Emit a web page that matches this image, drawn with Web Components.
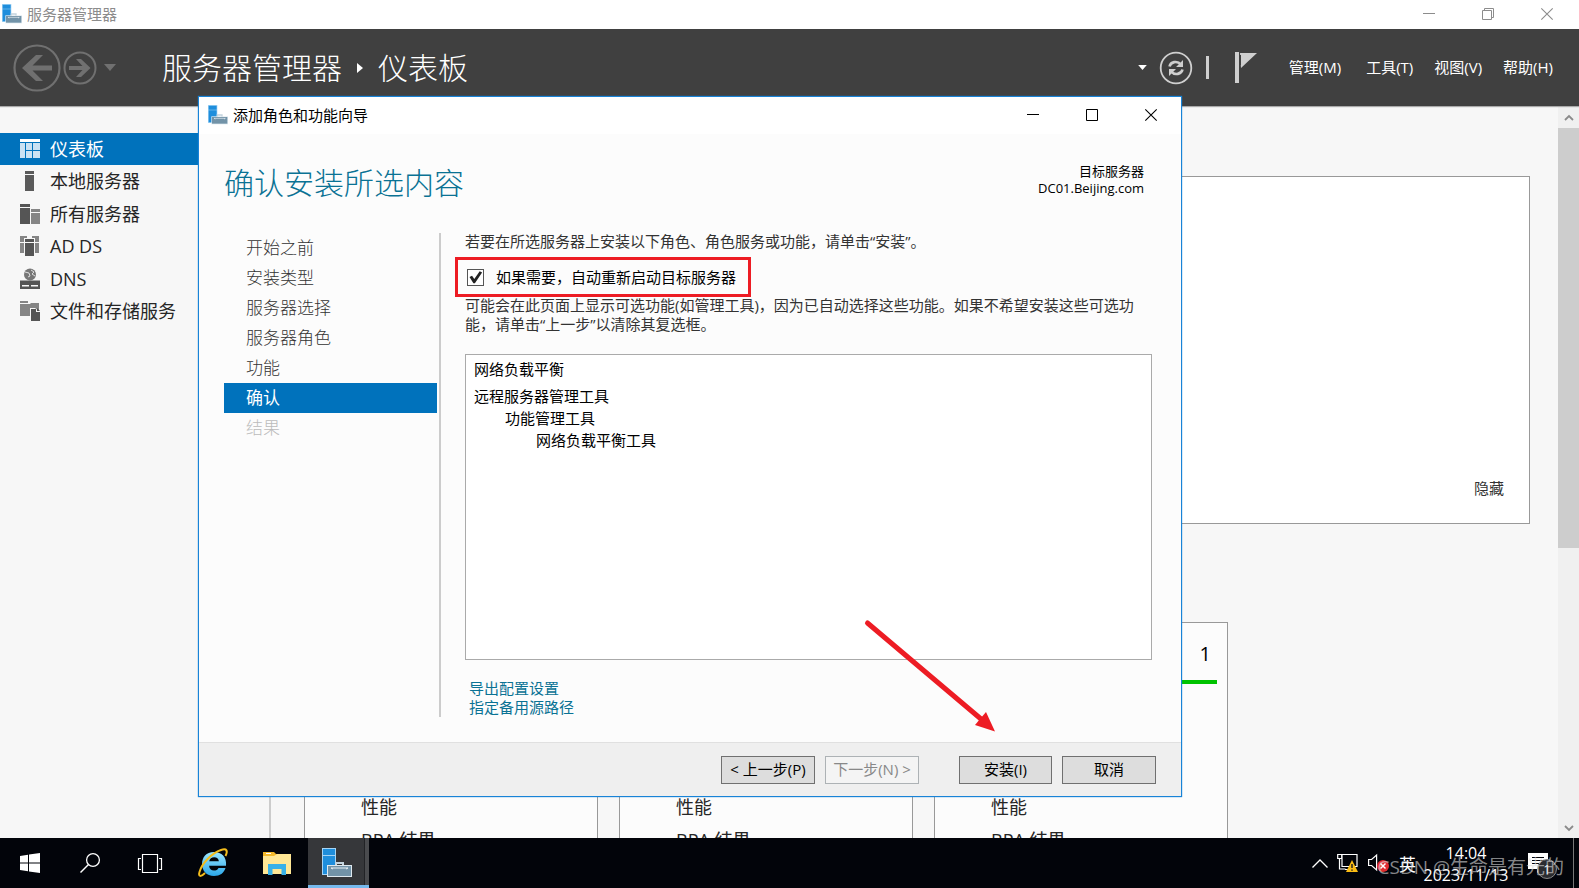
<!DOCTYPE html>
<html lang="zh-CN">
<head>
<meta charset="utf-8">
<title>服务器管理器</title>
<style>
  html, body { height: 100%; margin: 0; }
  body { font-family: "Open Sans", "Noto Sans CJK SC", sans-serif; font-size: 15px; overflow: hidden; }
</style>
</head>
<body>
<sm-desktop></sm-desktop>
<script>
const RESET = `*{box-sizing:border-box}button{font:inherit;color:inherit;background:none;border:0;padding:0;margin:0}a{color:inherit;text-decoration:none}h1,h2,p,ul{margin:0;padding:0;font-weight:inherit}ul{list-style:none}`;

function define(name, css, html) {
  customElements.define(name, class extends HTMLElement {
    constructor() {
      super();
      const t = document.createElement('template');
      t.innerHTML = `<style>${RESET}${css}</style>${html}`;
      this.attachShadow({ mode: 'open' }).append(t.content.cloneNode(true));
    }
  });
}

const ICONS = {
  server: ['0 0 30 30', `<path d="M0 0h14v27H0z" fill="#a5d4f5"/><path d="M1 1h12v6H1zM1 8h12v18H1z" fill="#1f8edc"/><path d="M14 18v-3h7v3" fill="none" stroke="#c4d4de" stroke-width="2"/><path d="M5 17h25v12H5z" fill="#dfe9ef"/><path d="M6 18h23v10H6z" fill="#7293a8"/><path d="M9 20h17M9 20l2 1M26 20l-2 1" stroke="#e8eff4" fill="none"/>`],
  back: ['0 0 48 48', `<circle cx="24" cy="24" r="22.500" fill="none" stroke="#707070" stroke-width="2.200"/><path d="M9 24L23 11h7L19.500 21.500H39v5H19.500L30 37h-7z" fill="#707070"/>`],
  forward: ['0 0 34 34', `<circle cx="17" cy="17" r="15.500" fill="none" stroke="#707070" stroke-width="2"/><path d="M27.500 17L18 8h-5l6.500 7H6v4h13.500L13 26h5z" fill="#707070"/>`],
  down: ['0 0 12 7', `<path d="M0 0h12L6 7z" fill="currentColor"/>`],
  right: ['0 0 6 10', `<path d="M0 0l6 5-6 5z" fill="currentColor"/>`],
  refresh: ['0 0 34 34', `<circle cx="17" cy="17" r="15.300" fill="none" stroke="#cfcfcf" stroke-width="1.800"/><g fill="none" stroke="#cfcfcf" stroke-width="2.600"><path d="M10.500 15.500C11.500 11 18 9 22 13.500"/><path d="M23.500 18.500C22.500 23 16 25 12 20.500"/></g><path d="M24 9v7h-7zM10 25v-7h7z" fill="#cfcfcf"/>`],
  flag: ['0 0 22 31', `<path d="M0 0h4v31H0zM5 1h17L6 16z" fill="#cfcfcf"/><path d="M5.500 3v10" stroke="#404040"/>`],
  min: ['0 0 12 12', `<path d="M0 5.500h12" stroke="currentColor"/>`],
  max: ['0 0 12 12', `<path d="M.5.500h11v11H.5z" fill="none" stroke="currentColor"/>`],
  restore: ['0 0 12 12', `<path d="M.5 2.500h9v9h-9zM2.500 2.500v-2h9v9h-2" fill="none" stroke="currentColor"/>`],
  close: ['0 0 12 12', `<path d="M.3.300l11.400 11.400M11.700.300L.3 11.700" stroke="currentColor" stroke-width="1.100"/>`],
  dashboard: ['0 0 20 20', `<path d="M0 0h20v3H0z" fill="#fff"/><path d="M0 4h5v15H0zM6 4h6v7H6zM13 4h7v7h-7zM6 12h6v7H6zM13 12h7v7h-7z" fill="#cbe2f3"/>`],
  local: ['0 0 20 20', `<path d="M5 0h9v3H5zM5 4h9v16H5z" fill="#5a5a5a"/>`],
  all: ['0 0 20 20', `<path d="M0 0h10v3H0zM0 4h10v16H0z" fill="#555"/><path d="M11 5h9v3h-9zM11 9h9v11h-9z" fill="#858585"/>`],
  adds: ['0 0 20 20', `<path d="M0 0h7v2H4v4H0zM12 0h7v6h-4V2h-3zM0 7h4v10H0zM15 7h4v10h-4z" fill="#858585"/><path d="M5 3h9v3H5zM5 7h9v13H5z" fill="#555"/>`],
  dns: ['0 0 20 20', `<circle cx="10" cy="5.500" r="6" fill="#777"/><path d="M5 3l4 1 1 3-2 1M11 1l3 2-2 2 3 2" stroke="#ddd" fill="none"/><path d="M0 11.500h20V20H0z" fill="#555"/><path d="M2 16h7v1.500H2zM11 16h7v1.500h-7z" fill="#f7f7f7"/>`],
  files: ['0 0 20 20', `<path d="M0 0h8v2H0zM0 3h9v12H0z" fill="#858585"/><path d="M9 3h1l1-1h8v8l-4-3h-5v8H9z" fill="#858585"/><path d="M11 8h5v3h4v9h-9z" fill="#555"/><path d="M17 7l3 3h-3z" fill="#555"/>`],
  up: ['0 0 10 6', `<path d="M1 5l4-4 4 4" fill="none" stroke="#8a8a8a" stroke-width="1.800"/>`],
  dn: ['0 0 10 6', `<path d="M1 1l4 4 4-4" fill="none" stroke="#8a8a8a" stroke-width="1.800"/>`],
  arrow: ['0 0 136 115', `<path d="M4.500 5L118 101" stroke="#ed1c24" stroke-width="5" stroke-linecap="round"/><path d="M123 94l9 19.500-20-6.500 5-6z" fill="#ed1c24"/>`],
  start: ['0 0 20 20', `<path d="M0 3l8-1.200V9.500H0zM9 1.600L20 0v9.500H9zM0 10.500h8v7.700L0 17zM9 10.500h11V20L9 18.400z" fill="#fff"/>`],
  search: ['0 0 20 20', `<circle cx="13" cy="7" r="6.400" fill="none" stroke="#fff" stroke-width="1.300"/><path d="M8.500 11.500L.5 19.500" stroke="#fff" stroke-width="1.500"/>`],
  tasks: ['0 0 24 19', `<path d="M4.500.500h15v18h-15zM3 4.500H.5v11H3M21 4.500h2.500v11H21" fill="none" stroke="#fff" stroke-width="1.200"/>`],
  ie: ['0 0 30 30', `<defs><linearGradient id="g" x2="0" y2="1"><stop stop-color="#9be6ff"/><stop offset="1" stop-color="#2ba7ea"/></linearGradient></defs><path d="M16 4C8 4 4 9.500 4 16s4.500 12 12 12c6 0 10-3 11.500-8h-7c-1 1.800-2.300 2.600-4.500 2.600-3 0-4.700-1.800-4.900-4.800H28C29 9 23.500 4 16 4zm-4.800 9.300c.6-2.700 2.300-4 5-4s4.300 1.300 4.700 4z" fill="url(#g)"/><path d="M7 25C3 29 0 29 1.500 24 4 15 14 5 23 2c6-2 7 1 4.500 6" fill="none" stroke="#f4bd1c" stroke-width="2"/>`],
  folder: ['0 0 28 24', `<path d="M0 1h11l2 2h14v5H0z" fill="#f5b92a"/><path d="M3 2h5v1H3z" fill="#fff"/><path d="M0 5h11l3-2h14v20H0z" fill="#ffe795"/><path d="M5 13h18v11h-4.500v-6h-9v6H5z" fill="#38b1e8"/>`],
  chevron: ['0 0 16 9', `<path d="M.5 8.500L8 1l7.500 7.500" fill="none" stroke="#fff" stroke-width="1.300"/>`],
  network: ['0 0 22 20', `<path d="M5 1.500h15v12H5zM8 16.500h5M.7 1.500h4v4h-4zM2.500 6v10h6" fill="none" stroke="#fff" stroke-width="1.200"/><path d="M15 7l6 12H9z" fill="#fbbc14"/><path d="M15 11v4M15 16.500v1.200" stroke="#222" stroke-width="1.500"/>`],
  sound: ['0 0 22 20', `<path d="M.6 6.500h3l5-4.500v15l-5-4.500h-3z" fill="none" stroke="#fff" stroke-width="1.200"/><circle cx="15" cy="13" r="6" fill="#e22b2f"/><path d="M12.500 10.500l5 5M17.500 10.500l-5 5" stroke="#fff" stroke-width="1.500"/>`],
  notes: ['0 0 20 20', `<path d="M0 0h20v16h-7l-4 4v-4H0z" fill="#fff"/><path d="M4 4.500h12M4 7.500h12M4 10.500h12" stroke="#02040a"/>`]
};
customElements.define('sm-icon', class extends HTMLElement {
  connectedCallback() {
    if (this.shadowRoot) return;
    const [box, body] = ICONS[this.getAttribute('name')];
    this.attachShadow({ mode: 'open' }).innerHTML =
      `<style>:host{display:block;flex:none;width:var(--w,20px);height:var(--h,var(--w,20px))}svg{display:block;width:100%;height:100%;overflow:visible}</style><svg viewBox="${box}" aria-hidden="true">${body}</svg>`;
  }
});

/* Caption bar shared by the main window and the wizard */
define('window-caption', `
  :host{display:flex;align-items:center;background:#fff;flex:none}
  .t{margin-left:5px;flex:1;line-height:20px}
  .c{display:flex;gap:47px} .c button{--w:12px}`,
  `<sm-icon name="server"></sm-icon><span class="t"><slot></slot></span>
   <div class="c"><button aria-label="最小化"><sm-icon name="min"></sm-icon></button>
   <button aria-label="最大化"><slot name="size"><sm-icon name="max"></sm-icon></slot></button>
   <button aria-label="关闭"><sm-icon name="close"></sm-icon></button></div>`);

define('sm-header', `
  :host{display:flex;align-items:center;height:77px;flex:none;background:#404040;color:#fff;padding:0 26px 0 13px;box-shadow:0 1px 1px #aaa;position:relative}
  .nav{display:flex;align-items:center;gap:2px;color:#707070}
  .nav .m{--w:12px;--h:7px;margin-left:5px}
  h1{display:flex;align-items:center;gap:15px;margin-left:46px;flex:1;font-size:30px;line-height:40px;font-weight:300}
  .tools{display:flex;align-items:center}
  .bar{width:3px;height:23px;background:#cfcfcf;margin:0 26px 0 13px}
  menu{display:flex;gap:21px;margin:0 0 0 32px;padding:0 0 2px;line-height:20px}
  menu button:first-child{margin-right:4px}`,
  `<div class="nav"><button aria-label="后退" style="--w:48px"><sm-icon name="back"></sm-icon></button>
   <button aria-label="前进" style="--w:34px"><sm-icon name="forward"></sm-icon></button>
   <button class="m" aria-label="历史"><sm-icon name="down"></sm-icon></button></div>
   <h1><span>服务器管理器</span><sm-icon name="right" style="--w:6px;--h:10px"></sm-icon><span>仪表板</span></h1>
   <div class="tools"><sm-icon name="down" style="--w:9px;--h:5px;margin-right:12px"></sm-icon>
   <button aria-label="刷新" style="--w:34px"><sm-icon name="refresh"></sm-icon></button><span class="bar"></span>
   <button aria-label="通知" style="--w:22px;--h:31px"><sm-icon name="flag"></sm-icon></button>
   <menu><button>管理(M)</button><button>工具(T)</button><button>视图(V)</button><button>帮助(H)</button></menu></div>`);

define('nav-item', `
  :host{display:block;color:#262626}
  a{display:flex;align-items:center;gap:10px;height:32px;padding-left:20px;font-size:18px;line-height:24px}
  :host([current]) a{background:#0072bc;color:#fff}`,
  `<a href="#"><slot name="icon"></slot><span><slot></slot></span></a>`);

define('sm-sidebar', `
  :host{display:block;width:271px;flex:none;border-right:2px solid #ccc;padding-top:26px}
  nav{display:grid;grid-auto-rows:32px;height:194px;align-content:space-between}`,
  `<nav>
   <nav-item current><sm-icon slot="icon" name="dashboard"></sm-icon>仪表板</nav-item>
   <nav-item><sm-icon slot="icon" name="local"></sm-icon>本地服务器</nav-item>
   <nav-item><sm-icon slot="icon" name="all"></sm-icon>所有服务器</nav-item>
   <nav-item><sm-icon slot="icon" name="adds"></sm-icon>AD DS</nav-item>
   <nav-item><sm-icon slot="icon" name="dns"></sm-icon>DNS</nav-item>
   <nav-item><sm-icon slot="icon" name="files"></sm-icon>文件和存储服务</nav-item></nav>`);

define('role-tile', `
  :host{display:block;border:1px solid #999;background:#fcfcfc;color:#262626;padding:16px 10px}
  header{height:45px;border-bottom:4px solid #00c300;text-align:right;padding-right:6px;font-size:20px;line-height:30px;color:#000}
  ul{margin:107px 0 0 46px;font-size:18px;line-height:33px}`,
  `<header><slot></slot></header><ul><li>性能</li><li>BPA 结果</li></ul>`);

define('sm-dashboard', `
  :host{display:block;flex:1;min-width:0;overflow:hidden;padding:69px 28px 0 33px}
  .welcome{height:348px;border:1px solid #999;background:#fff;display:flex;align-items:flex-end;justify-content:flex-end;padding:25px;line-height:20px;color:#333}
  .tiles{display:grid;grid-template-columns:repeat(3,294px);gap:21px;margin-top:98px}
  role-tile{height:280px}`,
  `<section class="welcome"><button>隐藏</button></section>
   <section class="tiles"><role-tile></role-tile><role-tile></role-tile><role-tile>1</role-tile></section>`);

define('scroll-rail', `
  :host{display:flex;flex-direction:column;width:21px;flex:none;background:#f0f0f0}
  button{height:21px;display:flex;align-items:center;justify-content:center;--w:10px;--h:6px;flex:none}
  .track{flex:1}.thumb{height:61%;background:#cdcdcd}`,
  `<button aria-label="向上滚动"><sm-icon name="up"></sm-icon></button><div class="track"><div class="thumb"></div></div><button aria-label="向下滚动"><sm-icon name="dn"></sm-icon></button>`);

define('wizard-step', `
  :host{display:block;height:30px;padding-left:22px;font-size:17px;line-height:30px;color:#333;font-weight:300}
  :host([current]){background:#0072bc;color:#fff;font-weight:400}
  :host([disabled]){color:#bbb}`, `<slot></slot>`);

define('wizard-dialog', `
  :host{display:flex;flex-direction:column;border:1px solid #1883d7;background:#fcfcfc;box-shadow:0 0 1px #1883d7}
  window-caption{height:37px;padding:0 24px 2px 9px}
  .head{display:flex;justify-content:space-between;padding:29px 37px 0 25px}
  h2{font-size:30px;line-height:40px;font-weight:300;color:#0a7294}
  .target{text-align:right;font-size:13px;line-height:17px}
  .mid{flex:1;display:flex;padding:30px 29px 25px 25px;min-height:0}
  .steps{width:217px;border-right:2px solid #ccc;padding-right:2px;flex:none}
  .page{flex:1;min-width:0;display:flex;flex-direction:column;margin-left:24px;color:#333;line-height:19px}
  .lead{line-height:17px}
  label{display:flex;align-items:center;gap:12px;align-self:flex-start;height:40px;margin:7px 0 -1px -10px;border:3px solid #ed1c24;padding:0 12px 0 9px;color:#000}
  input{appearance:none;width:17px;height:17px;margin:0;border:1px solid #555;background:#fff;display:grid}
  input:checked::before{content:"";background:#222;clip-path:polygon(10% 50%,27% 42%,42% 63%,78% 12%,94% 20%,46% 92%,36% 92%)}
  .note{margin-bottom:20px}
  .list{flex:1;border:1px solid #aaa;background:#fff;color:#000;padding:3px 8px;line-height:22px}
  .list ul{padding-left:31px}
  .list>li+li{margin-top:5px}
  .links{display:grid;justify-items:start;margin:19px 0 0 4px;color:#0a7294}
  footer{display:flex;justify-content:flex-end;align-items:center;gap:10px;height:54px;border-top:1px solid #e0e0e0;background:#efefef;padding-right:25px;flex:none}
  footer button{width:94px;height:28px;border:1px solid #707070;background:#ddd;line-height:20px;white-space:nowrap;padding-bottom:2px}
  footer button:disabled{color:#888;border-color:#adb2b5;background:#f4f4f4}
  footer .install{margin-left:30px;width:93px}`,
  `<window-caption>添加角色和功能向导</window-caption>
   <div class="head"><h2>确认安装所选内容</h2><div class="target">目标服务器<br>DC01.Beijing.com</div></div>
   <div class="mid"><nav class="steps"><wizard-step>开始之前</wizard-step><wizard-step>安装类型</wizard-step><wizard-step>服务器选择</wizard-step><wizard-step>服务器角色</wizard-step><wizard-step>功能</wizard-step><wizard-step current>确认</wizard-step><wizard-step disabled>结果</wizard-step></nav>
   <div class="page"><p class="lead">若要在所选服务器上安装以下角色、角色服务或功能，请单击“安装”。</p>
   <label for="restart"><input type="checkbox" id="restart" checked>如果需要，自动重新启动目标服务器</label>
   <p class="note">可能会在此页面上显示可选功能(如管理工具)，因为已自动选择这些功能。如果不希望安装这些可选功能，请单击“上一步”以清除其复选框。</p>
   <ul class="list"><li>网络负载平衡</li><li>远程服务器管理工具<ul><li>功能管理工具<ul><li>网络负载平衡工具</li></ul></li></ul></li></ul>
   <div class="links"><a href="#">导出配置设置</a><a href="#">指定备用源路径</a></div></div></div>
   <footer><button>&lt; 上一步(P)</button><button disabled>下一步(N) &gt;</button><button class="install">安装(I)</button><button>取消</button></footer>`);

define('task-bar', `
  :host{display:flex;height:50px;flex:none;background:#02040a;color:#fff;position:relative}
  .apps{display:flex;flex:1}
  .apps button{width:60px;display:grid;place-items:center}
  .apps .ie{width:66px}
  .apps .folder{width:62px}
  .apps .active{background:linear-gradient(90deg,#36373a 56px,#222326 56px,#222326 57px,#4a4b4e 57px);border-bottom:3px solid #76b9ed;width:61px;padding:3px 4px 0 0}
  .tray{display:flex;align-items:center;gap:9px;padding-right:5px}
  .clock{text-align:center;font-size:16px;line-height:22px;padding-top:2px;width:88px;margin-left:-3px}
  .note{position:relative;margin-left:9px}
  .badge{position:absolute;left:9px;top:6px;width:20px;height:20px;border:1px solid #888;border-radius:50%;background:#2b2c30;font-size:13px;line-height:18px;text-align:center}
  .peek{width:1px;height:50px;background:#777;margin-left:16px}
  .mark{position:absolute;right:15px;top:14px;font-size:19px;line-height:30px;color:rgba(220,220,220,.62);white-space:nowrap}
  .ime{font-size:17px}`,
  `<div class="apps"><button aria-label="开始"><sm-icon name="start"></sm-icon></button>
   <button aria-label="搜索"><sm-icon name="search"></sm-icon></button>
   <button aria-label="任务视图" style="--w:24px;--h:19px"><sm-icon name="tasks"></sm-icon></button>
   <button class="ie" aria-label="Internet Explorer" style="--w:30px"><sm-icon name="ie"></sm-icon></button>
   <button class="folder" aria-label="文件资源管理器" style="--w:28px;--h:24px"><sm-icon name="folder"></sm-icon></button>
   <button class="active" aria-label="服务器管理器" style="--w:30px"><sm-icon name="server"></sm-icon></button></div>
   <div class="tray"><sm-icon name="chevron" style="--w:16px;--h:9px"></sm-icon><sm-icon name="network" style="--w:22px;--h:20px"></sm-icon><sm-icon name="sound" style="--w:22px;--h:20px"></sm-icon><span class="ime">英</span>
   <div class="clock">14:04<br>2023/11/13</div><div class="note"><sm-icon name="notes"></sm-icon><span class="badge">1</span></div><span class="peek"></span></div>
   <div class="mark">CSDN @生命是有光的</div>`);

define('sm-desktop', `
  :host{display:flex;flex-direction:column;height:100vh;position:relative;background:#f7f7f7;overflow:hidden}
  .cap{height:29px;padding:0 26px 2px 2px;color:#8c8c8c;box-sizing:border-box}
  .body{flex:1;display:flex;min-height:0;padding-top:1px}
  wizard-dialog{position:absolute;left:198px;right:397px;top:96px;bottom:91px}
  .pointer{position:absolute;right:580px;bottom:155px;--w:136px;--h:115px;pointer-events:none}`,
  `<window-caption class="cap">服务器管理器<sm-icon slot="size" name="restore"></sm-icon></window-caption>
   <sm-header></sm-header>
   <div class="body"><sm-sidebar></sm-sidebar><sm-dashboard></sm-dashboard><scroll-rail></scroll-rail></div>
   <task-bar></task-bar>
   <wizard-dialog></wizard-dialog>
   <sm-icon class="pointer" name="arrow"></sm-icon>`);
</script>
</body>
</html>
